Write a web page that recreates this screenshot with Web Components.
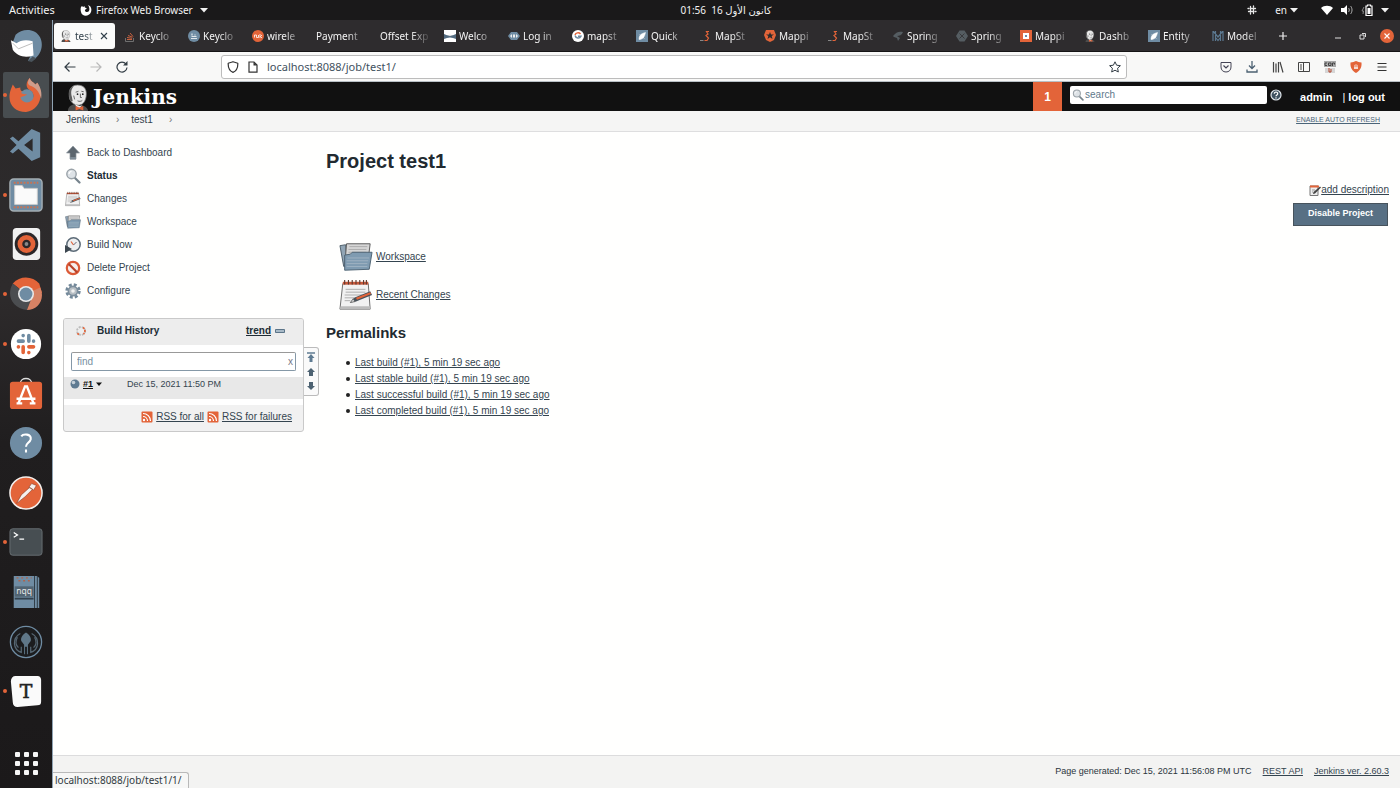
<!DOCTYPE html>
<html lang="en">
<head>
<meta charset="utf-8">
<title>test1 [Jenkins]</title>
<style>
html, body { margin: 0; }
body {
  --ui: "Noto Sans", "DejaVu Sans", sans-serif;
  --page: "Liberation Sans", Arial, sans-serif;
  --orange: #e36439;
  --steel: #6f8ca3;
  --ink: #34444f;
  font: 10px/16px var(--page);
  color: var(--ink);
}
</style>
</head>
<body>
<desktop-shell>
  <top-bar slot="top"></top-bar>
  <app-dock slot="dock"></app-dock>
  <browser-tabs></browser-tabs>
  <browser-toolbar></browser-toolbar>
  <jenkins-page>
    <jenkins-header slot="header"></jenkins-header>
    <jenkins-crumbs slot="crumbs"></jenkins-crumbs>
    <task-list slot="side"></task-list>
    <build-history slot="side"></build-history>
    <project-view slot="main"></project-view>
    <jenkins-footer slot="footer"></jenkins-footer>
  </jenkins-page>
  <status-tip slot="status">localhost:8088/job/test1/1/</status-tip>
</desktop-shell>

<script>
const head = '<path d="M3 16C1 8 3 1 11 1c8 0 10 6 9 12-1 6-4 9-8 9-4 0-7-2-9-6z" fill="#e9e9e9" stroke="#777" stroke-width=".8"/><path d="M3 15C1 9 2 4 7 2 4 6 4 9 5 13l1 5c-2 0-3-1-3-3z" fill="#5c5c5c"/><circle cx="11" cy="10.500" r=".9" fill="#222"/><circle cx="16.500" cy="10.500" r=".9" fill="#222"/><path d="M9 8.500l3-1M15 7.500l2.500.5M14 10v4h1.500M11 17.500c2 1 4 .5 5-.5M7 12l1 4" fill="none" stroke="#444" stroke-width=".8"/><path d="M1 28c0-4 3-6 6-7l5 3 4-2c3 1 6 3 6 6z" fill="#4c4c4c"/><path d="M8 21l4 5 4-4-3 1z" fill="#eee"/><path d="M9 23l4 1.500L17 23v4.500L13 26l-4 1.500z" fill="#e36439"/>';
const folder = '<path d="M1 5l6-1 2 24-4-1z" fill="#91a5b5" stroke="#4d5c68"/><path d="M8 3h25l-3 24H6z" fill="#d6d6d6" stroke="#555"/><path d="M11 6h19M10 9h19M10 12h19" stroke="#aaa"/><path d="M6 15l6-1 2-2h21l-3 18-26 1z" fill="#7f9bb1" stroke="#4d6272"/><path d="M9 18h23M8 21h23M8 24h22M8 27h22" stroke="#a9bac7" stroke-width=".8"/>';
const pad = '<path d="M4 5h27l2 27H1z" fill="#f1f1f1" stroke="#666"/><path d="M2 29h31v3H1z" fill="#bbb"/><path d="M4 3h27v3H4z" fill="#c9583a"/><path d="M6 1v5M10 1v5M14 1v5M18 1v5M22 1v5M26 1v5M29 1v5" stroke="#5d3a30" stroke-width="1.200"/><path d="M7 11h21M7 14h21M6 17h19M6 20h10M6 23h6" stroke="#aaa"/><path d="M12 25l4-5 17-7 2 4-17 7z" fill="#48525a"/><path d="M18 20l15-6 1 2-15 6z" fill="#e36439"/><path d="M12 25l3-4 2 3z" fill="#ddd" stroke="#333" stroke-width=".6"/>';
const stack = '<path d="M3 9.500h5M3 7.500l5 .8M4 5.500l4.500 1.700M6 3l3 3.500" stroke="#d96842" stroke-width=".9"/><path d="M1.500 8v3.500h8V8" fill="none" stroke="#777" stroke-width=".9"/>';
const mapst = '<path d="M9 1.500H6.500l1.500 2.500-2 1.500L8.500 8l-1.500 2.500H4.500" fill="none" stroke="#e36439" stroke-width="1.200"/><path d="M0 10.500h3.500" stroke="#888"/>';
const quick = '<path fill="#6f8ca3" d="M0 0h12v12H0z"/><path d="M9.500 2.500c-1 5-3 7-6.500 7 0-4 2-6 6.500-7zM3.500 4l2 2M7 7.500l1.500 1" fill="#fff" stroke="#fff" stroke-width=".5"/>';
const ICONS = {
  head: ['0 0 23 28', head],
  folder: ['0 0 36 34', folder],
  notepad: ['0 0 36 34', pad],
  caret: ['0 0 8 8', '<path d="M0 2h8L4 6.500z" fill="currentColor"/>'],
  ffmono: ['0 0 12 12', '<path d="M1 3l1-1 1 1 2-1C4 3 5 4 6 4c1 0 1 1 0 1-2 1-1 3 1 3 3 0 3-4 1-7 3 1 4 4 3 7-2 5-9 5-10 0C.500 6 .500 4 1 3z" fill="#fff"/>'],
  slackmono: ['0 0 12 12', '<path d="M4.500 2.500v4M7.500 5.500v4M2.500 7.500h4M5.500 4.500h4M4.500 10V9M7.500 2v1M2 4.500h1M9 7.500h1" stroke="#e8e8e8" stroke-width="1.300" stroke-linecap="round"/>'],
  wifi: ['0 0 12 12', '<path d="M0 4c3-3 9-3 12 0L6 11z" fill="#fff"/>'],
  volume: ['0 0 12 12', '<path d="M0 4h3l3-3v10L3 8H0z" fill="#fff"/><path d="M7.500 4c1 1 1 3 0 4M9.500 2c2 2 2 6 0 8" stroke="#aaa" fill="none"/>'],
  battery: ['0 0 12 12', '<path d="M5 2h1.500V1h3v1H11v9.500H5z" fill="none" stroke="#fff" stroke-width="1.200"/><path d="M6.500 4h3v6h-3z" fill="#fff"/><path d="M3 3L1 7h1.500L2 10" stroke="#888" fill="none"/>'],
  close: ['0 0 12 12', '<path d="M3 3l6 6M9 3l-6 6" stroke="currentColor" stroke-width="1.100"/>'],
  plus: ['0 0 12 12', '<path d="M6 2v8M2 6h8" stroke="#eee" stroke-width="1.200"/>'],
  min: ['0 0 12 12', '<path d="M3 8h6" stroke="#ddd"/>'],
  restore: ['0 0 12 12', '<path d="M4 5h4v4H4zM6 3.500h3.500V7" fill="none" stroke="#ddd"/>'],
  winclose: ['0 0 14 14', '<circle cx="7" cy="7" r="7" fill="#e36439"/><path d="M4.500 4.500l5 5M9.500 4.500l-5 5" stroke="#fff" stroke-width="1.100"/>'],
  stack: ['0 0 12 12', stack],
  keycloak: ['0 0 12 12', '<circle cx="6" cy="6" r="6" fill="#6f8ca3"/><path d="M3 8.500h6M3.500 6.500h5M4 3.500v2M7 4.500v1" stroke="#dfe6eb" stroke-width="1.200"/>'],
  wire: ['0 0 12 12', '<circle cx="6" cy="6" r="6" fill="#e36439"/><path d="M2.500 7.500V5h2v2.500h2V5M8 4v4M10 5L8.500 6.500 10 8" fill="none" stroke="#fff" stroke-width=".8"/>'],
  welcome: ['0 0 12 12', '<path fill="#fff" d="M0 0h12v12H0z"/><path d="M0 4c4 2 8 2 12 0v5c-4-2-8-2-12 0z" fill="#526b80"/><path d="M4 6l2-1.500L8 6z" fill="#ddd"/>'],
  login: ['0 0 12 12', '<path d="M0 6l3-4h6l3 4-3 4H3z" fill="#6f8ca3"/><path d="M2 6l2-2v4zM10 6L8 4v4zM5 4.500h2v3H5z" fill="#eee"/>'],
  google: ['0 0 12 12', '<circle cx="6" cy="6" r="6" fill="#fff"/><path d="M8.500 4A3.200 3.200 0 0 0 3 5" fill="none" stroke="#e36439" stroke-width="1.500"/><path d="M3 5.500a3.200 3.200 0 0 0 6 .7H6" fill="none" stroke="#6f8ca3" stroke-width="1.400"/>'],
  quick: ['0 0 12 12', quick],
  mapst: ['0 0 12 12', mapst],
  auth: ['0 0 12 12', '<path d="M2 0h8l2 5-2 5-4 2-4-2-2-5z" fill="#e36439"/><path d="M6 2l1 2.500h3L7.700 6l.8 3L6 7.300 3.500 9l.8-3L2 4.500h3z" fill="#2c2a2c"/>'],
  spring1: ['0 0 12 12', '<path d="M1 6c3-4 6-5 10-4-1 3-4 4-6 4l3 2-2 3-1-3-3-1z" fill="#555d62"/>'],
  spring2: ['0 0 12 12', '<path d="M3.500.5h5L12 6l-3.500 5.500h-5L0 6z" fill="#555d62"/><path d="M3.500 3.500l5 5M8.500 3.500l-5 5" stroke="#2c2a2c" stroke-width=".7"/>'],
  mapping: ['0 0 12 12', '<path fill="#e36439" d="M0 0h12v12H0z"/><path fill="#fff" d="M3 3h6v6H3z"/><path d="M5 7V5h2v2z" fill="#6f8ca3"/>'],
  model: ['0 0 12 12', '<path d="M1 1v10M3.500 1v10M8.500 1v10M11 1v10M1.500 1.500L6 7l4.500-5.500M4 8l2 2.500L8 8" fill="none" stroke="#5c7991" stroke-width="1.200"/>'],
  back: ['0 0 12 12', '<path d="M11.500 6H1M5.500 1.500L1 6l4.500 4.500" fill="none" stroke="#333d45" stroke-width="1.200"/>'],
  fwd: ['0 0 12 12', '<path d="M.500 6H11M6.500 1.500L11 6l-4.500 4.500" fill="none" stroke="#b9b9b9" stroke-width="1.200"/>'],
  reload: ['0 0 12 12', '<path d="M10 3a5 5 0 1 0 1 3.500" fill="none" stroke="#333d45" stroke-width="1.200"/><path d="M11.500 0v4.500H7z" fill="#333d45"/>'],
  shield: ['0 0 12 12', '<path d="M6 .700l4.800 1.600C11 7 9.500 10 6 11.400 2.500 10 1 7 1.200 2.300z" fill="none" stroke="#333" stroke-width="1.200" stroke-linejoin="round"/>'],
  doc: ['0 0 12 12', '<path d="M2 1h5l3 3v7.200H2z" fill="none" stroke="#333" stroke-width="1.200"/><path d="M6.500 1v3.500H10z" fill="#333"/>'],
  star: ['0 0 12 12', '<path d="M6 .8l1.600 3.400 3.800.5-2.800 2.500.7 3.800L6 9.200 2.700 11l.7-3.800L.6 4.700l3.800-.5z" fill="none" stroke="#333d45" stroke-linejoin="round"/>'],
  pocket: ['0 0 12 12', '<path d="M1 1.500h10V6c0 3-2 5-5 5S1 9 1 6z" fill="none" stroke="#445"/><path d="M3.500 4.500L6 7l2.500-2.500" fill="none" stroke="#445" stroke-width="1.200"/>'],
  download: ['0 0 12 12', '<path d="M6 0v7M3 4.500L6 7.500l3-3M1 8.500V11h10V8.500" fill="none" stroke="#4b6072" stroke-width="1.300"/>'],
  library: ['0 0 12 12', '<path d="M1.500 1v10.500M4 2.500v9M6.500 1v10.500M8 1l3 10.500" fill="none" stroke="#444" stroke-width="1.200"/>'],
  sidebar: ['0 0 12 12', '<path d="M.500 1.500h11v9H.500zM5.500 1.500v9M2 4h2M2 6h2M2 8h2" fill="none" stroke="#444"/>'],
  cors: ['0 0 12 12', '<path d="M0 0h12v6H0z" fill="#a9a9a9"/><path d="M3 2H1v2.500h2M4.500 2H7v2.500H4.500zM8.500 5V2h2v1.500" fill="none" stroke="#444"/><path d="M1 7h10v5H1z" fill="#d6d6d6"/><path d="M5 7v4h2V8" stroke="#b0432a" fill="none"/>'],
  ublock: ['0 0 12 12', '<path d="M6 0c2 1 3 1 5.500 1.500C12 7 9.500 10 6 12 2.500 10 0 7 .500 1.500 3 1 4 1 6 0z" fill="#e36439"/><path d="M4 5.500h4V8H4z" fill="#f6d9cf"/><path d="M4.800 5.500V4h2.400v1.500" fill="none" stroke="#f6d9cf" stroke-width=".8"/>'],
  menu: ['0 0 12 12', '<path d="M1.500 2.500h9M1.500 6h9M1.500 9.500h9" stroke="#333" stroke-width="1.200"/>'],
  lens: ['0 0 16 16', '<path d="M9.500 9.500l5 5" stroke="#76838c" stroke-width="2.200" stroke-linecap="round"/><circle cx="6.500" cy="6" r="4.700" fill="#dde2e6" stroke="#9aa2a8" stroke-width="1.400"/><path d="M4 6c0-1.500 1-2.500 2.500-2.500" fill="none" stroke="#fff" stroke-width="1.200"/>'],
  help: ['0 0 12 12', '<circle cx="6" cy="6" r="5" fill="#3f5261" stroke="#dfe5ea" stroke-width="1.200"/><path d="M4.300 4.700c0-2.300 3.500-2.200 3.400 0C7.600 6 6 6 6 7.300M6 8.300v1.200" fill="none" stroke="#fff" stroke-width="1.200"/>'],
  up: ['0 0 16 16', '<path d="M8 1l6.500 7H11v6H5V8H1.500z" fill="#5c666e" stroke="#8d979f" stroke-width=".7"/><path d="M5 12h6v2.500H5z" fill="#7e8b95"/>'],
  clock: ['0 0 16 16', '<circle cx="8.500" cy="7.500" r="6.700" fill="#eceeef" stroke="#5c6b77" stroke-width="1.500"/><path d="M8.500 8L6 4.500" stroke="#e36439" stroke-width="1.200"/><path d="M8.500 8l3-3" stroke="#667"/><path d="M0 8l7 4-7 4z" fill="#3d4850"/>'],
  no: ['0 0 16 16', '<circle cx="8" cy="8" r="6.200" fill="#f6efec" stroke="#dc5a36" stroke-width="2.200"/><path d="M3.800 4l8.500 8.500" stroke="#b8432a" stroke-width="2.200"/>'],
  gear: ['0 0 16 16', '<circle cx="8" cy="8" r="6.200" fill="none" stroke="#73899a" stroke-width="3" stroke-dasharray="2.870 2"/><circle cx="8" cy="8" r="4.600" fill="#b9c0c5" stroke="#7d8f9d" stroke-width="1.700"/><circle cx="8" cy="8" r="1.800" fill="#f1f1f1"/>'],
  sun: ['0 0 12 12', '<circle cx="6" cy="6" r="4" fill="#eee" stroke="#bbb" stroke-width="1.800" stroke-dasharray="2 1.200"/><path d="M8 2.500a4 4 0 0 1 .5 6.500M4 9.500a4 4 0 0 1-2-2" fill="none" stroke="#e36439" stroke-width="1.700" stroke-dasharray="2 1"/>'],
  minus: ['0 0 10 10', '<path d="M.500 3.500h9v3h-9z" fill="#a9bac7" stroke="#5c7589"/>'],
  ball: ['0 0 10 10', '<circle cx="5" cy="5" r="4.500" fill="#5f7b92"/><circle cx="3.500" cy="3.500" r="1.800" fill="#c5d0d9"/>'],
  rss: ['0 0 12 12', '<rect x=".500" y=".500" width="11" height="11" rx="1" fill="#e36439"/><circle cx="3" cy="9" r="1.200" fill="#fff"/><path d="M2 5.500a4.500 4.500 0 0 1 4.500 4.500M2 2.500A7.500 7.500 0 0 1 9.500 10" fill="none" stroke="#fff" stroke-width="1.200"/>'],
  ptop: ['0 0 10 10', '<path d="M1 1h8" stroke="#5f7b92" stroke-width="1.500"/><path d="M5 2l3.500 4H6.500v4h-3V6h-2z" fill="#5f7b92"/>'],
  pup: ['0 0 10 10', '<path d="M5 1l4 4H7v4H3V5H1z" fill="#4d6272"/>'],
  pdown: ['0 0 10 10', '<path d="M5 9L1 5h2V1h4v4h2z" fill="#4d6272"/>'],
  edit: ['0 0 12 12', '<path d="M1 2h8v9.500H1z" fill="#eee" stroke="#777"/><path d="M1 1.500h9v2H1z" fill="#e36439"/><path d="M11 2.500l1 1L6 9.500 4 10l.5-2z" fill="#444"/><path d="M3 6h3M3 8h1" stroke="#999"/>'],
  thunderbird: ['0 0 36 36', '<path d="M7 6C14-1 28-1 33 9c4 8 1 19-8 24l-5 1 3-6C12 30 4 24 3 17z" fill="#6f8ca3"/><path d="M2 12l6 3c4-3 10-4 17-2l1 15c-9 3-17 1-22-6z" fill="#fff"/><path d="M4 15l6 6 15-6" fill="none" stroke="#b9b9b9"/><path d="M20 34l5-5 4 2-5 4z" fill="#49535b"/>'],
  firefox: ['0 0 36 36', '<path d="M2 12l2-5 3 4 5-1c0 2 0 4 3 4-3 3-1 9 4 10 8 1 9-8 3-11-5-3-4-9 0-13 1 4 4 4 6 7l2-2c8 12 2 30-12 31C5 36-3 26 2 12z" fill="#e36439"/><path d="M22 0c1 4 4 4 6 7l2-2c4 6 5 11 4 17-2-8-6-12-12-14-3-2-2-5 0-8z" fill="#cf9d8b"/><circle cx="19" cy="19" r="7" fill="#6f8ca3"/><path d="M11 16c3-1 4 2 8 1-2 3-5 2-7 4z" fill="#e36439"/>'],
  vscode: ['0 0 36 36', '<path fill-rule="evenodd" d="M24 1l9 4v26l-9 4-14-13-6 5-3-2 7-7-7-7 3-2 6 5zm1 10l-9 7 9 7z" fill="#6f8ca3"/>'],
  files: ['0 0 36 36', '<rect x="1" y="1" width="34" height="34" rx="4" fill="#6f8ca3" stroke="#a4adb3" stroke-width="1.500"/><path d="M5 5h26M5 31h26" stroke="#c87353" stroke-width="2" stroke-dasharray="2 1.500"/><path d="M6 8h8l2 3h14v17H6z" fill="#fafafa" stroke="#ccc"/>'],
  rhythm: ['0 0 36 36', '<rect x="4" y="1" width="29" height="34" rx="4" fill="#f1f1f1"/><circle cx="18.500" cy="18" r="12.500" fill="#2b2729"/><circle cx="18.500" cy="18" r="7" fill="none" stroke="#e36439" stroke-width="5"/><circle cx="18.500" cy="18" r="2" fill="#888"/>'],
  chrome: ['0 0 36 36', '<path d="M18 18L4 7C12-2 25-1 32 7l3 10z" fill="#e36439"/><path d="M18 18L4 7C-3 19 3 33 19 35l5-13z" fill="#4b4d50"/><path d="M18 18l15-7c6 13-3 24-14 24l5-13z" fill="#d78264"/><circle cx="18" cy="18" r="8.500" fill="#e9e9e9"/><circle cx="18" cy="18" r="6.800" fill="#6f8ca3"/>'],
  slack: ['0 0 36 36', '<circle cx="18" cy="18" r="16" fill="#fff"/><g fill="none" stroke-width="3.800" stroke-linecap="round"><path d="M10 15h5M15 9v.1M21 9v6M26 15v.1" stroke="#6f8ca3"/><path d="M10 21v.1M15 21v6M21 21h5M21 27v.1" stroke="#e36439"/></g>'],
  store: ['0 0 36 36', '<path d="M12 8c0-7 12-7 12 0" fill="none" stroke="#ddd" stroke-width="1.600"/><rect x="1" y="6" width="34" height="29" rx="3" fill="#e36439"/><path d="M10 29l7-18h2l7 18M8 24h20M8 29h6M22 29h6" fill="none" stroke="#fff" stroke-width="2.600"/>'],
  question: ['0 0 36 36', '<circle cx="18" cy="18" r="17" fill="#6f8ca3"/><path d="M13 11c2-3 11-3 10 3-1 4-5 4-5 8M18 25v3" fill="none" stroke="#fff" stroke-width="2.200"/>'],
  postman: ['0 0 36 36', '<circle cx="18" cy="18" r="17" fill="#e36439" stroke="#f4efec" stroke-width="1.600"/><path d="M8 29l5-9 9-8 3 2-8 8zM21 12l3-4 5 2-3 5z" fill="#f5f0ee" stroke="#843a22" stroke-width=".6"/>'],
  terminal: ['0 0 36 36', '<rect x="1" y="4" width="34" height="28" rx="3" fill="#474e52" stroke="#686f73"/><path d="M5 8l4 2.500L5 13M11 15h5" fill="none" stroke="#fff" stroke-width="1.300"/>'],
  nqq: ['0 0 36 36', '<path d="M5 1h24l3 2v32H5z" fill="#6f8ca3"/><path d="M27 1v34M30 2v33" stroke="#2f3a43"/><path d="M6 24h20v2H6z" fill="#33424e"/><path d="M8 3h16M10 6h12" stroke="#b0634b" stroke-width="1.500" stroke-dasharray="2 3"/><path d="M6 12h20v11H6z" fill="#526472"/><text x="16" y="20" text-anchor="middle" font-family="Noto Sans, sans-serif" font-size="9" fill="#e6e6e6">nqq</text>'],
  kraken: ['0 0 36 36', '<circle cx="18" cy="18" r="16.500" fill="#1b1c1e" stroke="#6f8ca3" stroke-width="1.400"/><path d="M18 8c3 2 6 5 5 9l-3 4v10h-1v-8h-2v8h-1V21l-3-4c-1-4 2-7 5-9z" fill="#5f7788"/><path d="M12 9C3 14 4 26 13 29v-6M24 9c9 5 8 17-1 20v-6M9 13c-3 5-1 9 1 11M27 13c3 5 1 9-1 11" fill="none" stroke="#566773" stroke-width="1.300"/>'],
  typora: ['0 0 36 36', '<path d="M7 2h23c3 0 4 2 4 4v23c0 3-1 4-4 4l-21 2c-3 0-5-2-5-5L2 8c0-4 2-6 5-6z" fill="#fafafa"/><text x="18" y="25" text-anchor="middle" font-family="DejaVu Serif, serif" font-size="20" fill="#222" stroke="#222" stroke-width=".6">T</text>'],
  apps: ['0 0 24 24', '<g fill="#f6f6f6"><rect x="1" y="1" width="5" height="5" rx="1"/><rect x="10" y="1" width="5" height="5" rx="1"/><rect x="19" y="1" width="5" height="5" rx="1"/><rect x="1" y="10" width="5" height="5" rx="1"/><rect x="10" y="10" width="5" height="5" rx="1"/><rect x="19" y="10" width="5" height="5" rx="1"/><rect x="1" y="19" width="5" height="5" rx="1"/><rect x="10" y="19" width="5" height="5" rx="1"/><rect x="19" y="19" width="5" height="5" rx="1"/></g>']
};
const RESET = `
  :host, *, *::before { box-sizing: border-box; }
  a { color: inherit; }
  button { margin: 0; padding: 0; border: 0; background: none; color: inherit; font: inherit; display: grid; place-items: center; }
  input { font: inherit; margin: 0; outline: 0; }
  h1, h2, ul { margin: 0; padding: 0; }
`;
const define = (tag, css, html) => customElements.define(tag, class extends HTMLElement {
  constructor() {
    super();
    this.attachShadow({ mode: 'open' }).innerHTML = `<style>${RESET}${css}</style>${html}`;
  }
});

customElements.define('ui-icon', class extends HTMLElement {
  connectedCallback() {
    if (this.shadowRoot) return;
    const size = this.getAttribute('size') || '12';
    const [w, h = w] = size.split(' ');
    const [box, art] = ICONS[this.getAttribute('name')];
    this.attachShadow({ mode: 'open' }).innerHTML =
      `<style>:host{display:block;flex:none;width:${w}px;height:${h}px}svg{display:block;width:100%;height:100%}</style>
       <svg viewBox="${box}" aria-hidden="true">${art}</svg>`;
  }
});

define('desktop-shell', `
  :host { display: grid; grid-template: auto 1fr / 52px minmax(0, 1fr); min-height: 100vh; position: relative; }
  .top { grid-column: 1 / -1; }
  .dock { display: grid; }
  .window { display: flex; flex-direction: column; border-left: 1px solid #8fa3b3; background: #2e2c2e; }
  .status { position: absolute; left: 53px; bottom: 0; }
`, `<div class="top"><slot name="top"></slot></div>
    <div class="dock"><slot name="dock"></slot></div>
    <main class="window"><slot></slot></main>
    <div class="status"><slot name="status"></slot></div>`);

define('top-bar', `
  :host { display: grid; grid-template-columns: 52px 1fr auto 1fr; align-items: center; height: 20px;
    background: #1a191a; color: #f2f2f2; font: 10px/20px var(--ui); white-space: nowrap; }
  button { display: flex; align-items: center; }
  .act { padding-left: 9px; font-size: 11px; }
  .app { margin-left: 28px; gap: 4px; }
  .app ui-icon:last-child { margin-left: 3px; }
  .tray { display: flex; justify-content: flex-end; align-items: center; gap: 8px; padding-right: 11px; }
  .lang { gap: 3px; margin: 0 15px 0 9px; }
`, `<button class="act">Activities</button>
    <button class="app"><ui-icon name="ffmono"></ui-icon>Firefox Web Browser<ui-icon name="caret" size="8"></ui-icon></button>
    <time>01:56&nbsp; 16 كانون الأول</time>
    <div class="tray"><ui-icon name="slackmono"></ui-icon>
      <button class="lang">en<ui-icon name="caret" size="8"></ui-icon></button>
      <ui-icon name="wifi"></ui-icon><ui-icon name="volume"></ui-icon><ui-icon name="battery"></ui-icon><ui-icon name="caret" size="8"></ui-icon></div>`);

const apps = [['thunderbird', 'Thunderbird'], ['firefox', 'Firefox', 1, 1], ['vscode', 'VS Code'], ['files', 'Files', 1], ['rhythm', 'Rhythmbox'], ['chrome', 'Chrome', 1], ['slack', 'Slack', 1], ['store', 'Software'], ['question', 'Help'], ['postman', 'Postman'], ['terminal', 'Terminal', 1], ['nqq', 'Notepadqq'], ['kraken', 'GitKraken'], ['typora', 'Typora', 1]];
define('app-dock', `
  :host { display: flex; flex-direction: column; gap: 22px; padding-top: 1px;
    background: linear-gradient(#2a2829, #2e2b2c 35%, #201e1f 55%, #1b191a); }
  nav { flex: 1; display: grid; grid-auto-rows: 1fr; justify-items: center; align-items: center; }
  button { width: 46px; height: 46px; position: relative; border-radius: 2px; }
  button.on { background: #484d50; }
  button.run::before { content: ""; position: absolute; left: 0; top: 21px; width: 4px; height: 4px; border-radius: 2px; background: var(--orange); }
  .all { height: 50px; width: 52px; }
`, `<nav>${apps.map(([i, l, run, on]) => `<button aria-label="${l}" class="${run ? 'run' : ''} ${on ? 'on' : ''}"><ui-icon name="${i}" size="34"></ui-icon></button>`).join('')}</nav>
    <button class="all" aria-label="Show applications"><ui-icon name="apps" size="24"></ui-icon></button>`);

const tabs = [['stack', 'Keyclo'], ['keycloak', 'Keyclo'], ['wire', 'wirele'], ['', 'Payment'], ['', 'Offset Exp'], ['welcome', 'Welco'], ['login', 'Log in'], ['google', 'mapst'], ['quick', 'Quick'], ['mapst', 'MapSt'], ['auth', 'Mappi'], ['mapst', 'MapSt'], ['spring1', 'Spring'], ['spring2', 'Spring'], ['mapping', 'Mappi'], ['head', 'Dashb'], ['quick', 'Entity'], ['model', 'Model']];
define('browser-tabs', `
  :host { display: flex; align-items: center; height: 32px; padding: 0 6px 0 1px; background: #2e2c2e; color: #f4f4f4; font: 10px/26px var(--ui); border-bottom: 1px solid #151415; }
  .tab { display: flex; align-items: center; flex: 0 1 64px; min-width: 0; height: 26px; padding: 0 8px; gap: 3px; }
  .tab span { flex: 1; min-width: 0; overflow: hidden; white-space: nowrap; text-align: left; -webkit-mask: linear-gradient(90deg, #000 50%, #0003 95%); mask: linear-gradient(90deg, #000 50%, #0003 95%); }
  .tab:not(.on) { padding-right: 7px; }
  .tab.plain span { -webkit-mask: linear-gradient(90deg, #000 64%, #0003 95%); mask: linear-gradient(90deg, #000 64%, #0003 95%); }
  .on { flex-basis: 61px; margin-right: 1px; padding: 0 5px 0 6px; background: #fbfbfa; color: #33414b; border-radius: 3px; }
  .win { margin-left: auto; display: flex; gap: 12px; align-items: center; }
  .add { margin-left: 9px; }
`, `<button class="tab on"><ui-icon name="head"></ui-icon><span>test</span><ui-icon name="close"></ui-icon></button>
    ${tabs.map(([i, t]) => `<button class="tab ${i ? '' : 'plain'}">${i ? `<ui-icon name="${i}"></ui-icon>` : ''}<span>${t}</span></button>`).join('')}
    <button class="add" aria-label="New tab"><ui-icon name="plus"></ui-icon></button>
    <div class="win"><button aria-label="Minimise"><ui-icon name="min"></ui-icon></button><button aria-label="Restore"><ui-icon name="restore"></ui-icon></button><button aria-label="Close window"><ui-icon name="winclose" size="14"></ui-icon></button></div>`);

const tool = (i, l) => `<button aria-label="${l}"><ui-icon name="${i}"></ui-icon></button>`;
define('browser-toolbar', `
  :host { display: flex; align-items: center; height: 30px; padding: 0 5px 0 4px; background: #f8f8f7; border-bottom: 1px solid #b9c0c5; }
  button { width: 26px; height: 26px; flex: none; }
  .url { flex: 1; display: flex; align-items: center; height: 24px; margin: 0 86px; padding: 0 5px; gap: 8px; background: #fff; border: 1px solid #bcbcbc; border-radius: 3px; font: 11px/20px var(--ui); }
  .url input { flex: 1; min-width: 0; height: 20px; padding: 0; border: 0; background: none; color: #3f5160; }
`, `${tool('back', 'Back')}${tool('fwd', 'Forward')}${tool('reload', 'Reload')}
    <div class="url"><ui-icon name="shield"></ui-icon><ui-icon name="doc"></ui-icon><input aria-label="Address" value="localhost:8088/job/test1/"><ui-icon name="star"></ui-icon></div>
    ${tool('pocket', 'Pocket')}${tool('download', 'Downloads')}${tool('library', 'Library')}${tool('sidebar', 'Sidebars')}${tool('cors', 'CORS')}${tool('ublock', 'Blocker')}${tool('menu', 'Menu')}`);

define('jenkins-page', `
  :host { flex: 1; display: flex; flex-direction: column; background: #fffffe; }
  .body { flex: 1; display: grid; grid-template-columns: 273px minmax(0, 1fr); }
  .side { padding: 9px 0 0 10px; }
  .main { padding: 17px 11px 0 0; }
`, `<slot name="header"></slot><slot name="crumbs"></slot>
    <div class="body"><aside class="side"><slot name="side"></slot></aside><div class="main"><slot name="main"></slot></div></div>
    <slot name="footer"></slot>`);

define('jenkins-header', `
  :host { display: flex; align-items: stretch; height: 29px; background: #111; color: #fff; padding: 0 15px 0 14px; font-weight: bold; }
  a { text-decoration: none; }
  .logo { display: flex; gap: 4px; font: bold 20px/28px "DejaVu Serif", serif; align-items: center; }
  .logo ui-icon { align-self: flex-end; }
  .alert { margin-left: auto; width: 29px; background: var(--orange); font-size: 12px; line-height: 28px; }
  .find { width: 197px; height: 18px; margin: 4px 0 0 8px; background: #fff; border-radius: 2px; display: flex; align-items: center; padding-left: 2px; }
  .find input { flex: 1; min-width: 0; border: 0; padding: 0 0 0 1px; background: none; font-weight: normal; }
  .find input::placeholder { color: #61798b; opacity: 1; }
  .help { margin: 7px 18px 0 3px; align-self: flex-start; }
  .user { display: flex; gap: 10px; align-items: center; font-size: 11px; }
  .user b { font-weight: normal; }
`, `<a class="logo" href="#"><ui-icon name="head" size="22 27"></ui-icon>Jenkins</a>
    <button class="alert">1</button>
    <label class="find"><ui-icon name="lens"></ui-icon><input aria-label="Search" placeholder="search"></label>
    <a class="help" href="#" aria-label="Help"><ui-icon name="help"></ui-icon></a>
    <div class="user"><a href="#">admin</a><span><b>|</b> <a href="#">log out</a></span></div>`);

define('jenkins-crumbs', `
  :host { display: flex; align-items: center; height: 21px; padding: 0 20px 2px 13px; background: #f5f5f4; border-bottom: 1px solid #dededf; }
  a { text-decoration: none; }
  i { font-style: normal; color: #777; margin: 0 12px 0 16px; }
  i:last-of-type { margin-right: auto; }
  .auto { font-size: 7px; text-decoration: underline; color: #4a6478; }
`, `<a href="#">Jenkins</a><i>›</i><a href="#">test1</a><i>›</i><a class="auto" href="#">ENABLE AUTO REFRESH</a>`);

define('task-list', `
  :host { display: block; padding-left: 2px; }
  li { display: flex; } ul { list-style: none; }
  a { display: flex; align-items: center; gap: 6px; height: 23px; text-decoration: none; }
  .now { font-weight: bold; color: #202c35; }
`, `<nav><ul>${[['up', 'Back to Dashboard'], ['lens', 'Status'], ['notepad', 'Changes'], ['folder', 'Workspace'], ['clock', 'Build Now'], ['no', 'Delete Project'], ['gear', 'Configure']]
    .map(([i, t]) => `<li><a href="#" class="${t === 'Status' ? 'now' : ''}"><ui-icon name="${i}" size="16"></ui-icon>${t}</a></li>`).join('')}</ul></nav>`);

define('build-history', `
  :host { display: flex; align-items: flex-start; margin-top: 16px; }
  .box { width: 241px; border: 1px solid #c9c9c9; border-radius: 3px; background: #f1f1f1; overflow: hidden; }
  .head { display: flex; align-items: center; height: 26px; padding: 0 18px 2px 11px; color: #202c35; font-weight: bold; background: #ededed; }
  .head h2 { font: inherit; margin: 0 auto 0 10px; }
  .head ui-icon:last-child { margin-left: 4px; }
  .find { display: flex; padding: 7px 7px 6px; background: #fff; position: relative; }
  .find input { flex: 1; height: 19px; padding: 0 5px; border: 1px solid #8598a7; border-top-color: #999; border-radius: 2px; }
  .find input::placeholder { color: #78909f; opacity: 1; }
  .find button { position: absolute; right: 10px; top: 9px; height: 14px; color: #778; }
  table { width: 100%; border-collapse: collapse; background: #e8e8e8; font-size: 9px; line-height: 12px; }
  td { padding: 1px 0 9px; }
  td:first-child { width: 63px; padding-left: 6px; }
  .num { display: flex; align-items: center; gap: 3px; color: #111; font-weight: bold; }
  .rss { display: flex; align-items: center; justify-content: flex-end; gap: 3px; height: 32px; padding: 0 11px 2px 0; border-top: 6px solid #fff; }
  .page { border: 1px solid #bbb; border-left: 0; border-radius: 0 3px 3px 0; margin-top: 29px; width: 15px; height: 49px; display: grid; align-content: space-evenly; justify-items: center; background: #fafafa; }
`, `<section class="box">
      <div class="head"><ui-icon name="sun"></ui-icon><h2>Build History</h2><a href="#">trend</a><ui-icon name="minus" size="10"></ui-icon></div>
      <div class="find"><input aria-label="Find build" placeholder="find"><button aria-label="Clear">x</button></div>
      <table><tr><td><span class="num"><ui-icon name="ball" size="10"></ui-icon><a href="#">#1</a><ui-icon name="caret" size="6"></ui-icon></span></td><td>Dec 15, 2021 11:50 PM</td></tr></table>
      <div class="rss"><ui-icon name="rss"></ui-icon><a href="#">RSS for all</a><ui-icon name="rss"></ui-icon><a href="#">RSS for failures</a></div>
    </section>
    <div class="page">${['ptop', 'pup', 'pdown'].map((n, i) => `<button aria-label="${['Newest', 'Newer', 'Older'][i]}"><ui-icon name="${n}" size="10"></ui-icon></button>`).join('')}</div>`);

define('project-view', `
  :host { display: block; }
  h1 { font-size: 20px; line-height: 24px; color: #222a30; }
  h2 { font-size: 15px; line-height: 20px; margin-top: 9px; color: #222a30; }
  .actions { display: flex; flex-direction: column; align-items: flex-end; gap: 4px; margin-top: 8px; }
  .desc { display: flex; align-items: center; height: 18px; }
  .off { height: 23px; width: 95px; margin-right: 1px; background: #587084; border: 1px solid #47535c; color: #fff; font: bold 9px/12px var(--page); padding-bottom: 3px; }
  .big { list-style: none; margin-top: 12px; padding-left: 13px; }
  .big li { height: 38px; display: flex; align-items: center; gap: 3px; }
  .links { list-style: none; margin-top: 12px; padding-left: 20px; }
  .links li { display: flex; align-items: center; gap: 5px; }
  .links li::before { content: ""; width: 4px; height: 4px; border-radius: 2px; background: #222; }
`, `<h1>Project test1</h1>
    <div class="actions"><span class="desc"><ui-icon name="edit"></ui-icon><a href="#">add description</a></span><button class="off">Disable Project</button></div>
    <ul class="big"><li><ui-icon name="folder" size="34"></ui-icon><a href="#">Workspace</a></li><li><ui-icon name="notepad" size="34"></ui-icon><a href="#">Recent Changes</a></li></ul>
    <h2>Permalinks</h2>
    <ul class="links">${['build', 'stable build', 'successful build', 'completed build'].map(k => `<li><a href="#">Last ${k} (#1), 5 min 19 sec ago</a></li>`).join('')}</ul>`);

define('jenkins-footer', `
  :host { display: flex; justify-content: flex-end; align-items: center; gap: 11px; height: 33px; padding: 0 11px 2px 0; background: #f3f3f2; border-top: 1px solid #dcdcdd; font-size: 9px; }
  span { color: #2c363d; }
`, `<span>Page generated: Dec 15, 2021 11:56:08 PM UTC</span><a href="#">REST API</a><a href="#">Jenkins ver. 2.60.3</a>`);

define('status-tip', `
  :host { display: block; padding: 0 6px 0 2px; background: #f7f7f6; border: 1px solid #b9b9b9; border-width: 1px 1px 0 0; border-radius: 0 3px 0 0; color: #303a41; font: 10px/15px var(--ui); }
`, `<slot></slot>`);
</script>
</body>
</html>
